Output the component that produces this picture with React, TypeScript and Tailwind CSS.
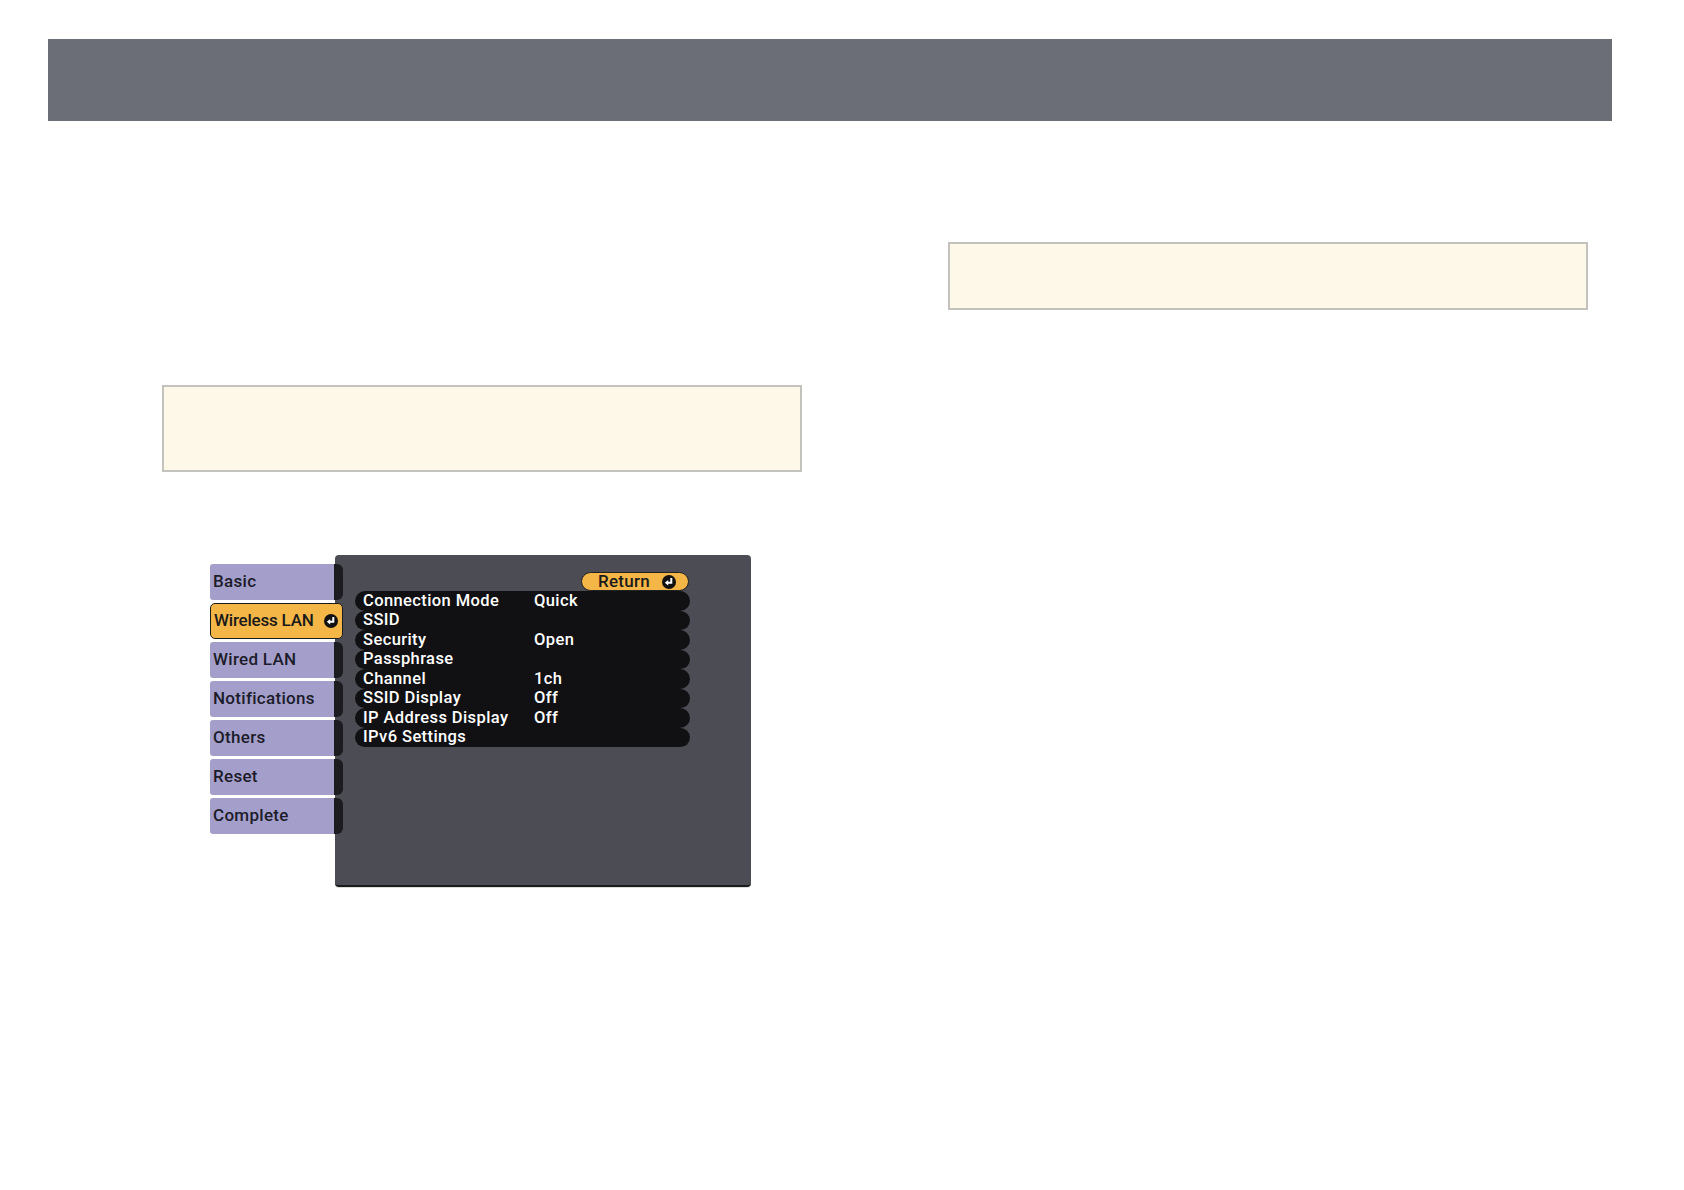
import React from "react"

const tabs = ["Basic", "Wireless LAN", "Wired LAN", "Notifications", "Others", "Reset", "Complete"]

const rows: [string, string][] = [
  ["Connection Mode", "Quick"],
  ["SSID", ""],
  ["Security", "Open"],
  ["Passphrase", ""],
  ["Channel", "1ch"],
  ["SSID Display", "Off"],
  ["IP Address Display", "Off"],
  ["IPv6 Settings", ""],
]

const EnterIcon = ({ size = 14 }: { size?: number }) => (
  <svg width={size} height={size} viewBox="0 0 14 14">
    <circle cx="7" cy="7" r="7" fill="#111" />
    <path d="M9.3 3v4.8H5.4" stroke="#fff" strokeWidth="2" fill="none" />
    <path d="M2.8 7.8l3.4-2.8v5.6z" fill="#fff" />
  </svg>
)

const font = { fontFamily: "Roboto, 'Liberation Sans', sans-serif" }

const Tab = ({ label, active }: { label: string; active: boolean }) => {
  if (active) {
    return (
      <div className="flex h-[36px] w-[133px] items-center justify-between rounded-[5px] border border-[#1c1c1c] bg-[#f3b647] pl-[3px] pr-[4px] text-[17px] font-medium tracking-[-0.2px] text-[#1a1a1a]">
        <span>{label}</span>
        <EnterIcon />
      </div>
    )
  }
  return (
    <div className="flex h-[36px] w-[133px]">
      <div className="flex w-[124px] items-center rounded-l-[3px] bg-[#a49fca] pl-[3px] text-[17px] font-medium tracking-[0.3px] text-[#1c1c2a]">
        {label}
      </div>
      <div className="w-[9px] rounded-r-[6px] bg-[#1b1b20]" />
    </div>
  )
}

const SettingsMenu = () => (
  <div className="flex" style={font}>
    <div className="relative z-10 mt-[9px] flex flex-col gap-[3px]">
      {tabs.map((t) => (
        <Tab key={t} label={t} active={t === "Wireless LAN"} />
      ))}
    </div>
    <div className="-ml-[8px] h-[332px] w-[416px] rounded-[4px] border-b-2 border-b-[#1a1a1a] bg-[#4c4c54] pl-[20px] pt-[17px] shadow-[0_1px_0_#ddd]">
      <div className="ml-[226px] flex h-[19px] w-[108px] items-center justify-center gap-[12px] rounded-full border border-[#222] bg-[#f3b647] pl-[4px] text-[17px] font-medium tracking-[0.3px] text-[#1a1a1a]">
        <span className="leading-none">Return</span>
        <EnterIcon size={14} />
      </div>
      <div className="w-[335px]">
        {rows.map(([k, v]) => (
          <div key={k} className="flex h-[19.5px] items-center rounded-full bg-[#111113] pl-[8px] text-[16.5px] font-medium leading-none tracking-[0.4px] text-white">
            <span className="w-[171px] whitespace-nowrap">{k}</span>
            <span>{v}</span>
          </div>
        ))}
      </div>
    </div>
  </div>
)

const NoteBox = ({ h }: { h: string }) => (
  <div className={`w-[640px] border-2 border-[#c4c2bd] bg-[#fdf8e7] ${h}`} />
)

export default function App() {
  return (
    <div className="min-h-[1190px] w-[1684px] bg-white">
      <div className="ml-[48px] mt-[39px] h-[82px] w-[1564px] bg-[#6b6e76]" />
      <div className="flex">
        <div className="ml-[162px] w-[640px] pt-[264px]">
          <NoteBox h="h-[87px]" />
          <div className="ml-[48px] mt-[83px]">
            <SettingsMenu />
          </div>
        </div>
        <div className="ml-[146px] w-[640px] pt-[121px]">
          <NoteBox h="h-[68px]" />
        </div>
      </div>
    </div>
  )
}
